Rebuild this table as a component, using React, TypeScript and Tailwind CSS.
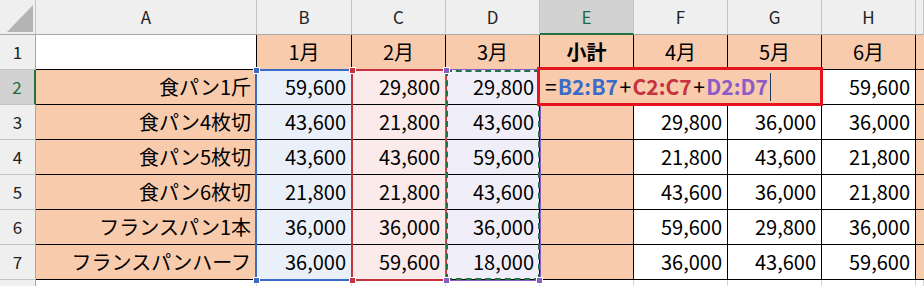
import React from "react";

const font = { fontFamily: '"Noto Sans CJK JP", "Noto Sans", sans-serif' };

const letters = ["A", "B", "C", "D", "E", "F", "G", "H", ""];

const rows = [
  { label: "食パン1斤", b: "59,600", c: "29,800", d: "29,800", f: "", g: "", h: "59,600" },
  { label: "食パン4枚切", b: "43,600", c: "21,800", d: "43,600", f: "29,800", g: "36,000", h: "36,000" },
  { label: "食パン5枚切", b: "43,600", c: "43,600", d: "59,600", f: "21,800", g: "43,600", h: "21,800" },
  { label: "食パン6枚切", b: "21,800", c: "21,800", d: "43,600", f: "43,600", g: "36,000", h: "21,800" },
  { label: "フランスパン1本", b: "36,000", c: "36,000", d: "36,000", f: "59,600", g: "29,800", h: "36,000" },
  { label: "フランスパンハーフ", b: "36,000", c: "59,600", d: "18,000", f: "36,000", g: "43,600", h: "59,600" },
];

const months = ["1月", "2月", "3月", "小計", "4月", "5月", "6月"];

const num = "flex items-center justify-end pr-[5px] border-r border-b border-black";

function Handle({ className }: { className: string }) {
  return <div className={`absolute w-[7px] h-[7px] border border-white ${className}`} />;
}

export default function App() {
  return (
    <div
      className="relative w-[924px] h-[286px] overflow-hidden bg-white text-black text-[20px]"
      style={font}
    >
      <div className="grid grid-cols-[36px_221px_95px_94px_94px_94px_94px_94px_94px_8px] grid-rows-[35px_repeat(7,35px)_6px]">
        {/* header row */}
        <div className="relative bg-[#efefef] border-r border-b border-r-[#c4c4c4] border-b-[#a8a8a8]">
          <svg className="absolute left-0 top-0" width="36" height="35" viewBox="0 0 36 35">
            <polygon points="7,32 33,32 33,5" fill="#b4b4b4" />
          </svg>
        </div>
        {letters.map((l, i) =>
          l === "E" ? (
            <div
              key={i}
              className="flex items-center justify-center bg-[#d2d2d2] text-[#1e6b41] text-[17px] border-r border-r-[#c4c4c4] border-b-2 border-b-[#217346]"
            >
              {l}
            </div>
          ) : (
            <div
              key={i}
              className="flex items-center justify-center bg-[#efefef] text-[#222] text-[17px] border-r border-b border-r-[#c4c4c4] border-b-[#a8a8a8]"
            >
              {l}
            </div>
          )
        )}

        {/* row 1 */}
        <div className="flex items-center justify-center bg-[#efefef] text-[#222] text-[17px] border-r border-b border-r-[#a8a8a8] border-b-[#c4c4c4]">
          1
        </div>
        <div className="bg-white border-r border-b border-black" />
        {months.map((m) => (
          <div
            key={m}
            className={`flex items-center justify-center bg-[#f8cbad] border-r border-b border-black ${
              m === "小計" ? "font-bold" : ""
            }`}
          >
            {m}
          </div>
        ))}
        <div className="bg-[#f8cbad] border-b border-black" />

        {/* rows 2-7 */}
        {rows.map((r, i) => (
          <React.Fragment key={r.label}>
            {i === 0 ? (
              <div className="flex items-center justify-center bg-[#d2d2d2] text-[#1e6b41] text-[17px] border-r-2 border-b border-r-[#217346] border-b-[#c4c4c4]">
                2
              </div>
            ) : (
              <div className="flex items-center justify-center bg-[#efefef] text-[#222] text-[17px] border-r border-b border-r-[#a8a8a8] border-b-[#c4c4c4]">
                {i + 2}
              </div>
            )}
            <div className={`${num} bg-[#f8cbad]`}>{r.label}</div>
            <div className={`${num} bg-[#eaf0fa]`}>{r.b}</div>
            <div className={`${num} bg-[#fbeaea]`}>{r.c}</div>
            <div className={`${num} bg-[#f0eef9]`}>{r.d}</div>
            <div className={`${num} bg-[#f8cbad]`} />
            <div className={`${num} bg-white`}>{r.f}</div>
            <div className={`${num} bg-white`}>{r.g}</div>
            <div className={`${num} bg-white`}>{r.h}</div>
            <div className="bg-[#f8cbad] border-b border-black" />
          </React.Fragment>
        ))}

        {/* row 8 (partial) */}
        <div className="bg-[#efefef] border-r border-r-[#a8a8a8]" />
        {letters.map((_, i) => (
          <div key={i} className="bg-white border-r border-[#d4d4d4]" />
        ))}
      </div>

      {/* reference ranges */}
      <div className="absolute left-[255px] top-[69px] w-[98px] h-[212px] border-2 border-[#3a6bc9]" />
      <div className="absolute left-[351px] top-[69px] w-[96px] h-[212px] border-2 border-[#c8323c]" />
      <div className="absolute left-[445px] top-[69px] w-[96px] h-[212px] border border-[#8b5cc8]">
        <div className="h-full w-full border-2 border-dashed border-[#217346]" />
      </div>
      <Handle className="left-[253px] top-[67px] bg-[#3a6bc9]" />
      <Handle className="left-[253px] top-[277px] bg-[#3a6bc9]" />
      <Handle className="left-[349px] top-[67px] bg-[#c8323c]" />
      <Handle className="left-[349px] top-[277px] bg-[#c8323c]" />
      <Handle className="left-[443px] top-[67px] bg-[#8b5cc8]" />
      <Handle className="left-[443px] top-[277px] bg-[#8b5cc8]" />
      <Handle className="left-[536px] top-[277px] bg-[#8b5cc8]" />

      {/* cell editor */}
      <div className="absolute left-[537px] top-[67px] w-[286px] h-[39px] flex items-center pl-[4px] bg-[#f8cbad] border-[3px] border-[#e6141e] whitespace-nowrap text-[21px]">
        <span className="px-px">=</span>
        <span className="font-bold text-[#3a6bc9]">B2:B7</span>
        <span className="px-[1.5px]">+</span>
        <span className="font-bold text-[#c8323c]">C2:C7</span>
        <span className="px-[1.5px]">+</span>
        <span className="font-bold text-[#8b5cc8]">D2:D7</span>
        <span className="ml-[2px] w-px h-[28px] bg-[#1e3a5f]" />
      </div>
    </div>
  );
}
